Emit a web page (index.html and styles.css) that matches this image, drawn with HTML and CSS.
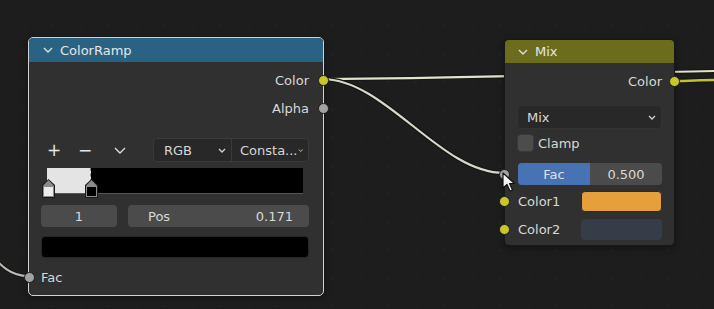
FILE: index.html
```html
<!DOCTYPE html>
<html lang="en">
<head>
  <meta charset="UTF-8">
  <title>Shader Editor - ColorRamp / Mix</title>
  <link rel="stylesheet" href="styles.css">
</head>
<body>
  <div class="editor">

    <!-- links between sockets -->
    <svg class="wires" width="714" height="309" viewBox="0 0 714 309">
      <g fill="none" stroke-linecap="round">
        <path d="M-60,222 C-10,232 -8,276 28,276" stroke="#151515" stroke-width="4"/>
        <path d="M-60,222 C-10,232 -8,276 28,276" stroke="#bdbdb4" stroke-width="2"/>
        <path d="M322,79 C500,78 600,73 714,71" stroke="#151515" stroke-width="4.5"/>
        <path d="M322,79 C500,78 600,73 714,71" stroke="#e2e2cc" stroke-width="2.2"/>
        <path d="M322,79 C386,79 440,173 504,173" stroke="#151515" stroke-width="4.5"/>
        <path d="M322,79 C386,79 440,173 504,173" stroke="#d8d8c8" stroke-width="2.2"/>
        <path d="M675,81 C690,81 700,80 714,80" stroke="#151515" stroke-width="4.5"/>
        <path d="M675,81 C690,81 700,80 714,80" stroke="#c2c22e" stroke-width="2.4"/>
      </g>
    </svg>

    <!-- ColorRamp node (selected) -->
    <div class="node ramp-node selected">
      <div class="node-header header-blue">
        <svg class="chev" width="10" height="6" viewBox="0 0 10 6"><polyline points="1,1 5,5 9,1"/></svg>
        <span>ColorRamp</span>
      </div>
      <div class="node-body">
        <div class="row out">Color<i class="socket socket-color right"></i></div>
        <div class="row out">Alpha<i class="socket socket-gray right"></i></div>

        <div class="ramp-tools">
          <span class="tool">+</span>
          <span class="tool">&minus;</span>
          <svg class="tool-chev" width="12" height="7" viewBox="0 0 12 7"><polyline points="1,1 6,6 11,1"/></svg>
          <div class="dropdowns">
            <div class="dd">RGB<svg width="8" height="5" viewBox="0 0 8 5"><polyline points="1,1 4,4 7,1"/></svg></div>
            <div class="dd">Consta...<svg width="8" height="5" viewBox="0 0 8 5"><polyline points="1,1 4,4 7,1"/></svg></div>
          </div>
        </div>

        <div class="ramp">
          <div class="ramp-white"></div>
          <div class="stop stop-white"></div>
          <div class="stop stop-black"></div>
        </div>

        <div class="ramp-fields">
          <div class="field index">1</div>
          <div class="field pos"><span>Pos</span><span>0.171</span></div>
        </div>

        <div class="swatch swatch-black"></div>

        <div class="row in">Fac<i class="socket socket-gray left"></i></div>
      </div>
    </div>

    <!-- Mix node -->
    <div class="node mix-node">
      <div class="node-header header-olive">
        <svg class="chev" width="10" height="6" viewBox="0 0 10 6"><polyline points="1,1 5,5 9,1"/></svg>
        <span>Mix</span>
      </div>
      <div class="node-body">
        <div class="row out">Color<i class="socket socket-color right"></i></div>
        <div class="select">Mix<svg width="8" height="5" viewBox="0 0 8 5"><polyline points="1,1 4,4 7,1"/></svg></div>
        <div class="check"><span class="box"></span>Clamp</div>
        <div class="slider">
          <i class="socket socket-gray left"></i>
          <div class="slider-fill" style="width: 50%">Fac</div>
          <div class="slider-val">0.500</div>
        </div>
        <div class="color-rows">
          <div class="row color-row">Color1<i class="socket socket-color left"></i><span class="swatch-sm orange"></span></div>
          <div class="row color-row">Color2<i class="socket socket-color left"></i><span class="swatch-sm slate"></span></div>
        </div>
      </div>
    </div>

    <!-- mouse pointer -->
    <svg class="cursor" width="14" height="20" viewBox="0 0 14 20">
      <polygon points="1,1 1,16 5,12.5 8,19 10.5,18 7.5,11.5 12.5,11.5" fill="#f4f4f4" stroke="#111" stroke-width="1.2" stroke-linejoin="round"/>
    </svg>
  </div>
</body>
</html>
```

FILE: styles.css
```css
* { box-sizing: border-box; margin: 0; padding: 0; }
body {
  background: #1d1d1d;
  font-family: "DejaVu Sans", "Liberation Sans", sans-serif;
  font-size: 13px;
  color: #d8d8d8;
}
.editor {
  position: relative;
  width: 714px;
  height: 309px;
  overflow: hidden;
  background-color: #1d1d1d;
  background-image: radial-gradient(circle, #242424 1px, transparent 1.5px);
  background-size: 28px 28px;
  background-position: 10px 12px;
}
.wires { position: absolute; left: 0; top: 0; }
.cursor { position: absolute; left: 502px; top: 172px; }

/* nodes */
.node {
  position: absolute;
  background: #303030;
  border: 1px solid #181818;
  border-radius: 5px;
  box-shadow: 0 2px 6px rgba(0, 0, 0, 0.35);
}
.node.selected { border-color: #d2d2d2; }
.ramp-node { left: 28px; top: 37px; width: 296px; height: 259px; }
.mix-node { left: 504px; top: 39px; width: 171px; height: 207px; }

.node-header {
  height: 24px;
  display: flex;
  align-items: center;
  gap: 7px;
  padding-left: 14px;
  color: #e6e6e6;
  border-radius: 4px 4px 0 0;
}
.header-blue { background: #296283; }
.header-olive { background: #6c6c1d; height: 23px; padding-left: 13px; }
.chev polyline { fill: none; stroke: #e0e0e0; stroke-width: 1.4; }

.node-body { position: relative; padding: 4px 14px 0 12px; }
.row {
  position: relative;
  height: 28px;
  display: flex;
  align-items: center;
}
.row.out { justify-content: flex-end; }

.socket {
  position: absolute;
  top: 50%;
  width: 11px;
  height: 11px;
  margin-top: -5.5px;
  border-radius: 50%;
  border: 1px solid #1c1c1c;
}
.socket.right { right: -20px; }
.socket.left { left: -18px; }
.socket-color { background: #c7c729; }
.socket-gray { background: #a1a1a1; }

/* ColorRamp controls */
.ramp-tools {
  display: flex;
  align-items: center;
  height: 24px;
  margin-top: 16px;
  padding-left: 6px;
}
.tool { width: 31px; font-size: 17px; color: #e6e6e6; line-height: 1; }
.tool-chev { margin-left: 5px; }
.tool-chev polyline { fill: none; stroke: #dcdcdc; stroke-width: 1.4; }
.dropdowns {
  display: flex;
  margin-left: auto;
  height: 24px;
  border: 1px solid #3a3a3a;
  border-radius: 4px;
  background: #282828;
  overflow: hidden;
}
.dd {
  display: flex;
  align-items: center;
  justify-content: space-between;
  width: 77px;
  padding: 0 5px 0 10px;
  color: #d6d6d6;
}
.dd + .dd { border-left: 1px solid #3a3a3a; padding-left: 8px; width: 77px; }
.dd svg polyline, .select svg polyline { fill: none; stroke: #d0d0d0; stroke-width: 1.3; }

.ramp {
  position: relative;
  height: 26px;
  margin: 6px 6px 0 6px;
  background: #000;
  border-bottom: 1px solid #555;
}
.ramp-white {
  width: 44px;
  height: 100%;
  background: #e4e4e4;
  border-right: 1px dashed #888;
}
.stop {
  position: absolute;
  top: 11px;
  width: 13px;
  height: 19px;
  background: #1a1a1a;
  clip-path: polygon(50% 0, 100% 32%, 100% 100%, 0 100%, 0 32%);
}
.stop::before {
  content: "";
  position: absolute;
  left: 1px; top: 1px; right: 1px; bottom: 1px;
  background: #8a8a8a;
  clip-path: polygon(50% 0, 100% 34%, 100% 100%, 0 100%, 0 34%);
}
.stop::after {
  content: "";
  position: absolute;
  left: 2px; right: 2px; bottom: 2px;
  height: 9px;
}
.stop-white { left: -5px; }
.stop-white::after { background: #ececec; }
.stop-black { left: 38px; }
.stop-black::after { background: #000; }

.ramp-fields {
  display: flex;
  gap: 11px;
  height: 22px;
  margin-top: 11px;
}
.field {
  background: #4b4b4b;
  border-radius: 4px;
  display: flex;
  align-items: center;
  color: #d8d8d8;
}
.field.index { width: 76px; justify-content: center; }
.field.pos { flex: 1; justify-content: space-between; padding: 0 16px 0 20px; }

.swatch {
  height: 22px;
  margin-top: 9px;
  border-radius: 4px;
}
.swatch-black { background: #000; border: 1px solid #262626; }
.row.in { margin-top: 5px; height: 28px; }
.row.in .socket.left { left: -17px; }

/* Mix controls */
.mix-node .node-body { padding: 4px 12px 0 12px; }
.mix-node .socket.right { right: -18px; }
.select {
  height: 24px;
  margin-top: 10px;
  background: #282828;
  border: 1px solid #333;
  border-radius: 4px;
  display: flex;
  align-items: center;
  justify-content: space-between;
  padding: 0 5px 0 9px;
}
.check {
  display: flex;
  align-items: center;
  gap: 4px;
  height: 18px;
  margin-top: 5px;
}
.box {
  width: 17px;
  height: 18px;
  background: #4c4c4c;
  border: 1px solid #3a3a3a;
  border-radius: 4px;
}
.slider {
  position: relative;
  display: flex;
  height: 22px;
  margin-top: 11px;
  margin-left: 1px;
  background: #4b4b4b;
  border-radius: 4px;
}
.slider .socket.left { left: -19px; }
.slider-fill {
  background: #4772b3;
  border-radius: 4px 0 0 4px;
  display: flex;
  align-items: center;
  justify-content: center;
  color: #e0e0e0;
}
.slider-val {
  flex: 1;
  display: flex;
  align-items: center;
  justify-content: center;
  color: #d8d8d8;
}
.color-rows { margin-top: 2px; }
.color-row { padding-left: 1px; }
.color-row .socket.left { left: -18px; }
.swatch-sm {
  margin-left: auto;
  width: 81px;
  height: 21px;
  border-radius: 4px;
}
.orange { background: #e5a03b; border: 1px solid #2a2a2a; }
.slate { background: #363c48; }
```
